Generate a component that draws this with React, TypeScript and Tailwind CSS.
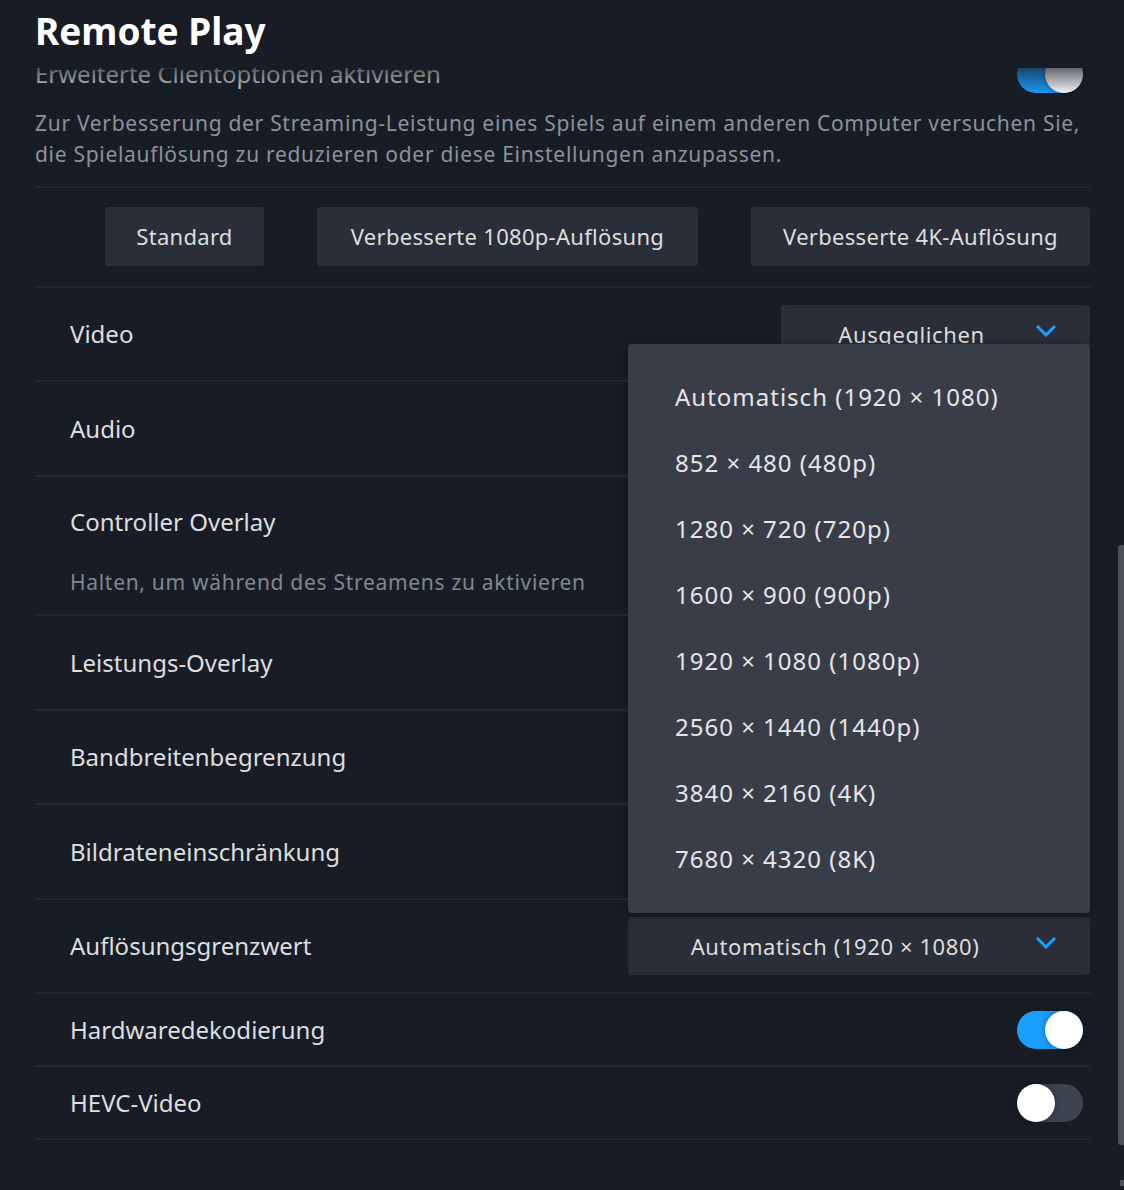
import React from 'react';

function Chevron() {
  return (
    <svg width="22" height="13" viewBox="0 0 22 13" className="absolute right-[33px] top-[19px]">
      <polyline points="2,2 11,11 20,2" fill="none" stroke="#1a9fff" strokeWidth="3" />
    </svg>
  );
}

function Dropdown({ value, width }: { value: string; width: string }) {
  return (
    <div className={`relative flex h-[58px] items-center justify-center rounded-[4px] bg-[#2a2e38] pr-[48px] text-[22px] tracking-[0.6px] text-[#dcdedf] ${width}`}>
      <span>{value}</span>
      <Chevron />
    </div>
  );
}

function Toggle({ on }: { on: boolean }) {
  return (
    <div
      className={`flex h-[38px] w-[66px] rounded-full ${on ? 'justify-end bg-[#1a9fff]' : 'justify-start bg-[#3d4450]'}`}
    >
      <div className="h-[38px] w-[38px] rounded-full bg-white shadow-[0_0_6px_rgba(0,0,0,0.35)]" />
    </div>
  );
}

export default function App() {
  const menuItems = [
    'Automatisch (1920 × 1080)',
    '852 × 480 (480p)',
    '1280 × 720 (720p)',
    '1600 × 900 (900p)',
    '1920 × 1080 (1080p)',
    '2560 × 1440 (1440p)',
    '3840 × 2160 (4K)',
    '7680 × 4320 (8K)',
  ];

  return (
    <div className="relative h-[1190px] w-[1124px] overflow-hidden bg-[#181d25] font-['Noto_Sans',sans-serif] text-[#dcdedf]">
      {/* Sticky header */}
      <header className="relative z-10 h-[68px] bg-[#181d25] px-[35px] pt-[6px]">
        <h1 className="text-[37px] font-bold leading-[50px] text-white">Remote Play</h1>
      </header>

      {/* Scrolled content */}
      <div className="relative px-[35px] pr-[34px]">
        <div className="pointer-events-none absolute left-0 right-0 top-0 z-[5] h-[40px] bg-linear-to-b from-[#181d25] to-[#181d25]/0" />

        <div className="mt-[-13px] flex h-[38px] items-center justify-between pr-[7px]">
          <span className="text-[24px]">Erweiterte Clientoptionen aktivieren</span>
          <Toggle on />
        </div>

        <p className="mb-[16px] mt-[15px] text-[21px] leading-[31px] tracking-[0.7px] text-[#8b929a]">
          Zur Verbesserung der Streaming-Leistung eines Spiels auf einem anderen Computer versuchen Sie,
          <br />
          die Spielauflösung zu reduzieren oder diese Einstellungen anzupassen.
        </p>

        {/* Presets */}
        <div className="flex justify-end gap-[53px] border-t-2 border-[#23272f] pb-[20px] pt-[19px]">
          <button className="h-[59px] w-[159px] rounded-[3px] bg-[#2a2e38] text-[22px] tracking-[0.3px] text-[#dcdedf]">Standard</button>
          <button className="h-[59px] w-[381px] rounded-[3px] bg-[#2a2e38] text-[22px] tracking-[0.3px] text-[#dcdedf]">Verbesserte 1080p-Auflösung</button>
          <button className="h-[59px] w-[339px] rounded-[3px] bg-[#2a2e38] text-[22px] tracking-[0.3px] text-[#dcdedf]">Verbesserte 4K-Auflösung</button>
        </div>

        {/* Settings rows */}
        <div className="flex h-[94px] items-center justify-between border-t-2 border-[#23272f] pl-[35px]">
          <span className="text-[24px]">Video</span>
          <Dropdown value="Ausgeglichen" width="w-[309px]" />
        </div>
        <div className="flex h-[95px] items-center border-t-2 border-[#23272f] pl-[35px]">
          <span className="text-[24px]">Audio</span>
        </div>
        <div className="flex h-[139px] flex-col border-t-2 border-[#23272f] pl-[35px] pt-[29px]">
          <span className="text-[24px] leading-[32px]">Controller Overlay</span>
          <span className="mt-[29px] text-[21px] leading-[30px] tracking-[0.7px] text-[#80878f]">Halten, um während des Streamens zu aktivieren</span>
        </div>
        <div className="flex h-[95px] items-center border-t-2 border-[#23272f] pl-[35px]">
          <span className="text-[24px]">Leistungs-Overlay</span>
        </div>
        <div className="flex h-[94px] items-center border-t-2 border-[#23272f] pl-[35px]">
          <span className="text-[24px]">Bandbreitenbegrenzung</span>
        </div>
        <div className="flex h-[95px] items-center border-t-2 border-[#23272f] pl-[35px]">
          <span className="text-[24px]">Bildrateneinschränkung</span>
        </div>
        <div className="flex h-[94px] items-center justify-between border-t-2 border-[#23272f] pl-[35px]">
          <span className="text-[24px]">Auflösungsgrenzwert</span>
          <Dropdown value="Automatisch (1920 × 1080)" width="w-[462px]" />
        </div>
        <div className="flex h-[73px] items-center justify-between border-t-2 border-[#23272f] pl-[35px] pr-[7px]">
          <span className="text-[24px]">Hardwaredekodierung</span>
          <Toggle on />
        </div>
        <div className="flex h-[75px] items-center justify-between border-y-2 border-[#23272f] pl-[35px] pr-[7px]">
          <span className="text-[24px]">HEVC-Video</span>
          <Toggle on={false} />
        </div>
      </div>

      {/* Open resolution menu */}
      <div className="absolute left-[628px] top-[344px] z-20 flex h-[569px] w-[462px] flex-col rounded-[4px] bg-[#393d47] py-[20px] shadow-[0_2px_8px_rgba(0,0,0,0.35)]">
        {menuItems.map((item) => (
          <div key={item} className="flex h-[66px] items-center pl-[47px] text-[24px] tracking-[1px] text-[#e4e6e8]">
            {item}
          </div>
        ))}
      </div>

      {/* Scrollbar */}
      <div className="absolute right-0 top-[545px] h-[600px] w-[6px] rounded-l-[3px] bg-[#4b5059]" />
      <div className="absolute right-0 top-[1180px] h-[6px] w-[4px] bg-[#4b5059]" />
    </div>
  );
}
